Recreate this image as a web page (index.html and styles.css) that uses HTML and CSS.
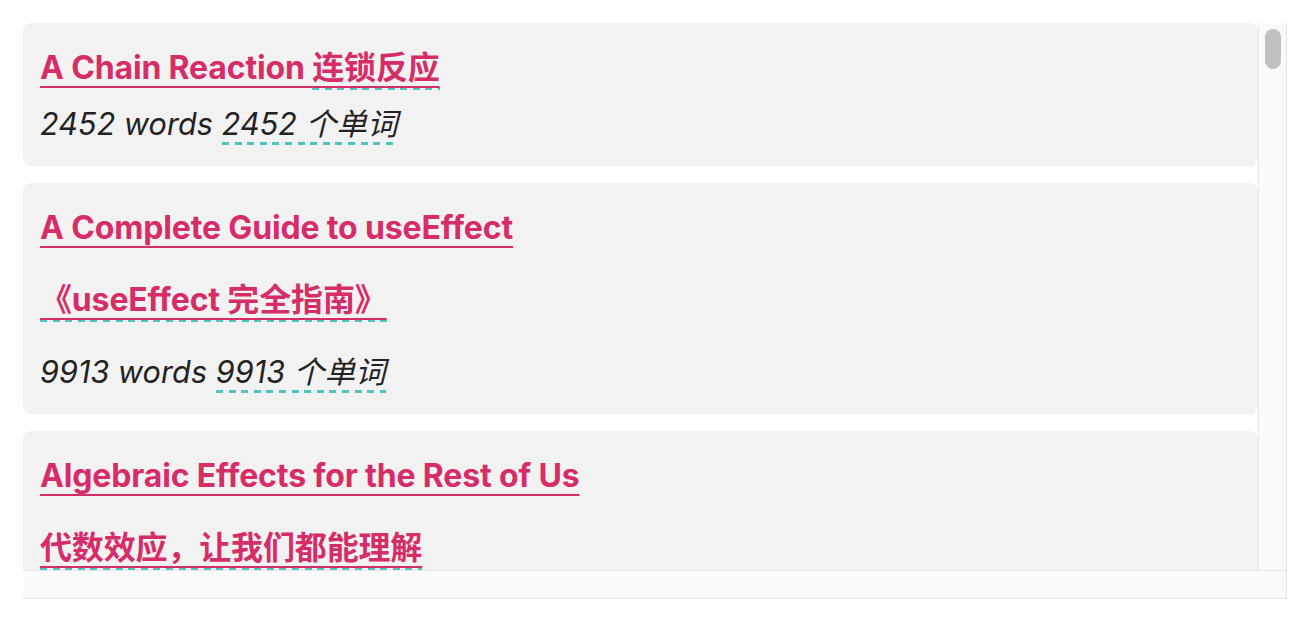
FILE: index.html
```html
<!DOCTYPE html>
<html lang="en">
<head>
<meta charset="utf-8">
<title>Posts</title>
<link rel="stylesheet" href="styles.css">
</head>
<body>
<div class="frame">
  <div class="frame-row">
    <div class="viewport">
      <ul class="posts">
        <li class="card"><h2 class="title"><a href="#">A Chain Reaction <span class="tr">连锁反应</span></a></h2><p class="meta">2452 words <span class="tr">2452 个单词</span></p></li>
        <li class="card"><h2 class="title"><a href="#">A Complete Guide to useEffect<span class="tr-block"><span class="tr">《useEffect 完全指南》</span></span></a></h2><p class="meta">9913 words <span class="tr">9913 个单词</span></p></li>
        <li class="card"><h2 class="title"><a href="#">Algebraic Effects for the Rest of Us<span class="tr-block"><span class="tr">代数效应，让我们都能理解</span></span></a></h2><p class="meta">3062 words <span class="tr">3062 个单词</span></p></li>
        <li class="card"><h2 class="title"><a href="#">Before You memo() <span class="tr">在你使用 memo() 之前</span></a></h2><p class="meta">1161 words <span class="tr">1161 个单词</span></p></li>
      </ul>
    </div>
    <div class="vbar"><div class="vthumb"></div></div>
  </div>
  <div class="hbar"></div>
</div>
</body>
</html>
```

FILE: styles.css
```css
html, body {
  margin: 0;
  padding: 0;
  background: #ffffff;
}

body {
  padding: 23px;
  font-family: Inter, "Noto Sans CJK SC", sans-serif;
  color: #222222;
}

.frame {
  width: 1264px;
  height: 576px;
  display: flex;
  flex-direction: column;
}

.frame-row {
  flex: 1;
  min-height: 0;
  display: flex;
}

.viewport {
  flex: 1;
  min-width: 0;
  overflow: hidden;
}

.vbar {
  width: 29px;
  flex: none;
  box-sizing: border-box;
  background: #fafafa;
  border-left: 1px solid #e6e6e6;
  border-right: 1px solid #e6e6e6;
  padding: 6px 0 0 6px;
}

.vthumb {
  width: 16px;
  height: 40px;
  border-radius: 8px;
  background: #c1c1c1;
}

.hbar {
  height: 29px;
  flex: none;
  box-sizing: border-box;
  background: #fafafa;
  border-top: 1px solid #e6e6e6;
  border-bottom: 1px solid #e6e6e6;
  border-right: 1px solid #e6e6e6;
}

.posts {
  list-style: none;
  margin: 0;
  padding: 0;
  display: flex;
  flex-direction: column;
  gap: 17px;
}

.card {
  background: #f2f2f2;
  border-radius: 8px;
  padding: 25px 17px 26px;
}

.title {
  margin: 0;
  font-size: 32px;
  font-weight: 700;
  line-height: 40px;
  letter-spacing: -0.15px;
}

.title a {
  color: #d62d68;
  text-decoration: underline;
  text-decoration-color: #d62d68;
  text-decoration-thickness: 2px;
  text-underline-offset: 7px;
}

.tr {
  padding-bottom: 3px;
  background-image: repeating-linear-gradient(to right, #4ec3bd 0 7px, transparent 7px 12.6px);
  background-repeat: no-repeat;
  background-position: left bottom;
  background-size: 100% 3px;
}

.tr-block {
  display: block;
  margin-top: 32px;
  padding-bottom: 16px;
}

.meta {
  margin: 20px 0 0;
  font-size: 30.5px;
  font-style: italic;
  font-weight: 400;
  line-height: 32px;
  letter-spacing: 0.1px;
}
```
